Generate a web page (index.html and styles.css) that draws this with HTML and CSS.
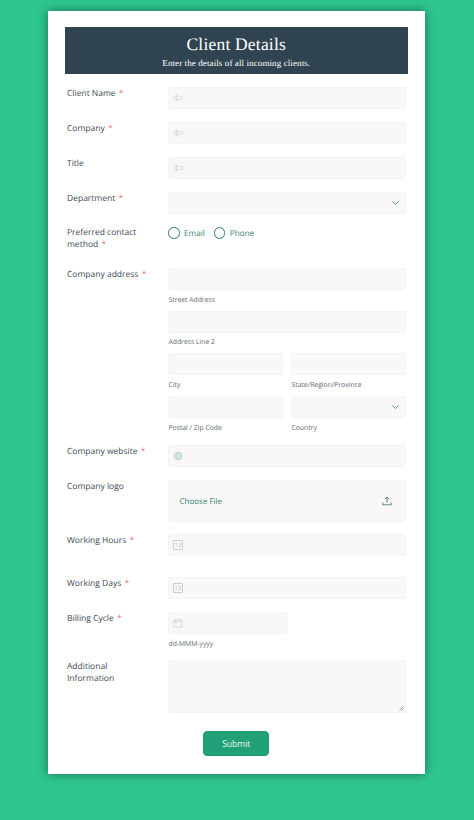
FILE: index.html
```html
<!DOCTYPE html>
<html lang="en">
<head>
<meta charset="utf-8">
<title>Client Details</title>
<link rel="stylesheet" href="styles.css">
</head>
<body>
<main class="card">
  <header class="banner">
    <h1>Client Details</h1>
    <p>Enter the details of all incoming clients.</p>
  </header>
  <form class="form">
    <div class="row h35"><div class="label">Client Name <span class="req">*</span></div>
      <div class="box"><svg class="ico" viewBox="0 0 12 8"><path d="M1 2.500h9.500v3H1zM4 1v6M2.500 1h3M2.500 7h3"/></svg></div></div>
    <div class="row h35"><div class="label">Company <span class="req">*</span></div>
      <div class="box"><svg class="ico" viewBox="0 0 12 8"><path d="M1 2.500h9.500v3H1zM4 1v6M2.500 1h3M2.500 7h3"/></svg></div></div>
    <div class="row h35"><div class="label">Title</div>
      <div class="box"><svg class="ico" viewBox="0 0 12 8"><path d="M1 2.500h9.500v3H1zM4 1v6M2.500 1h3M2.500 7h3"/></svg></div></div>
    <div class="row h34"><div class="label">Department <span class="req">*</span></div>
      <div class="box select"><svg class="chev" viewBox="0 0 10 6"><path d="M1.500 1.200 5 4.700l3.500-3.500"/></svg></div></div>
    <div class="row h42"><div class="label">Preferred contact<br>method <span class="req">*</span></div>
      <div class="radios">
        <span class="radio"><i class="dot"></i>Email</span>
        <span class="radio"><i class="dot"></i>Phone</span>
      </div></div>
    <div class="row h177"><div class="label">Company address <span class="req">*</span></div>
      <div class="addr">
        <div class="wide"><div class="box"></div><small>Street Address</small></div>
        <div class="wide"><div class="box"></div><small>Address Line 2</small></div>
        <div><div class="box"></div><small>City</small></div>
        <div><div class="box"></div><small>State/Region/Province</small></div>
        <div><div class="box"></div><small>Postal / Zip Code</small></div>
        <div><div class="box select"><svg class="chev" viewBox="0 0 10 6"><path d="M1.500 1.200 5 4.700l3.500-3.500"/></svg></div><small>Country</small></div>
      </div></div>
    <div class="row h35"><div class="label">Company website <span class="req">*</span></div>
      <div class="box"><svg class="ico globe" viewBox="0 0 10 10"><circle cx="5" cy="5" r="4"/><ellipse cx="5" cy="5" rx="1.800" ry="4"/><path d="M1 5h8M1.600 3h6.800M1.600 7h6.800"/></svg></div></div>
    <div class="row h54"><div class="label">Company logo</div>
      <div class="box file"><span>Choose File</span><svg class="upload" viewBox="0 0 10 10"><path d="M5 6.500V1M3 3l2-2 2 2M.8 6.500v2.300h8.400V6.500"/></svg></div></div>
    <div class="row h43"><div class="label">Working Hours <span class="req">*</span></div>
      <div class="box"><span class="num">12</span></div></div>
    <div class="row h35"><div class="label">Working Days <span class="req">*</span></div>
      <div class="box"><span class="num">12</span></div></div>
    <div class="row h48"><div class="label">Billing Cycle <span class="req">*</span></div>
      <div class="date"><div class="box"><svg class="ico cal" viewBox="0 0 10 10"><path d="M1 2h8v7.200H1zM1 4h8M3 1v1.500M7 1v1.500"/></svg></div><small>dd-MMM-yyyy</small></div></div>
    <div class="row h71"><div class="label">Additional<br>Information</div>
      <div class="box area"><svg class="grip" viewBox="0 0 6 6"><path d="M.5 5.500l5-5M3 5.500l2.500-2.500"/></svg></div></div>
    <div class="actions"><button type="button" class="submit">Submit</button></div>
  </form>
</main>
</body>
</html>
```
FILE: styles.css
```css
* { box-sizing: border-box; }
html, body { margin: 0; height: 820px; overflow: hidden; }
body {
  background: #2ec78f;
  font-family: "Open Sans", "Liberation Sans", sans-serif;
  padding: 11px 49px 0 48px;
  text-rendering: geometricPrecision;
}
.card {
  height: 763px;
  background: #fff;
  box-shadow: 0 0 10px rgba(20, 70, 55, .7);
  padding: 16px 17px 0 16.500px;
}
.banner {
  height: 47px;
  background: #2f4351;
  color: #fff;
  text-align: center;
  font-family: "Liberation Serif", serif;
  padding-top: 6px;
}
.banner h1 { margin: 0; font-size: 17.500px; line-height: 22px; font-weight: 400; letter-spacing: .2px; }
.banner p { margin: 2px 0 0; font-size: 9px; line-height: 12px; letter-spacing: .1px; }
.form { display: flex; flex-direction: column; padding-top: 13px; }
.row { display: grid; grid-template-columns: 103.500px 238px; }
.h35 { height: 35px; }
.h34 { height: 34px; }
.h42 { height: 42px; }
.h177 { height: 177px; }
.h54 { height: 54px; }
.h43 { height: 43px; }
.h48 { height: 48px; }
.h71 { height: 71px; }
.label {
  padding-left: 2.500px;
  font-size: 8.500px;
  line-height: 11.500px;
  color: #3d4a56;
  margin-top: 1px;
  white-space: nowrap;
}
.req { color: #e57373; margin-left: 1px; }
.box {
  position: relative;
  display: flex;
  align-items: center;
  height: 22px;
  background: #f9f7f7;
  border: 1px solid #f5f3f3;
  border-radius: 2px;
}
.ico { width: 11px; height: 8px; margin-left: 4px; fill: none; stroke: #c9cdcb; stroke-width: .6; }
.globe { width: 10px; height: 10px; stroke: #a5ccbd; }
.cal { width: 10px; height: 10px; stroke: #c4c8c6; }
.select { justify-content: flex-end; padding-right: 5px; }
.chev { width: 9px; height: 6px; fill: none; stroke: #2f7f66; stroke-width: .9; }
.radios { display: flex; gap: 9px; }
.radio { display: flex; align-items: flex-start; gap: 4.500px; font-size: 8.200px; line-height: 16px; color: #2f8467; }
.dot { width: 11.500px; height: 11.500px; margin-top: 1px; border: 1px solid #2f7f66; border-radius: 50%; background: #fff; }
.addr { display: grid; grid-template-columns: 115px 115px; column-gap: 8px; grid-auto-rows: 42.700px; }
.wide { grid-column: span 2; }
small { display: block; margin-top: 4.500px; padding-left: .5px; font-size: 6.800px; line-height: 10px; color: #5f6973; }
.file { height: 42px; justify-content: space-between; padding: 0 13px 0 10.500px; font-size: 8px; color: #2f8467; }
.upload { width: 10px; height: 10px; fill: none; stroke: #3d6f60; stroke-width: .8; }
.num {
  width: 10px; height: 10px; margin-left: 4px;
  border: 1px solid #c9cdcb; border-radius: 1px;
  font-size: 6px; line-height: 8px; text-align: center; color: #bcc0be;
}
.date { width: 120px; }
.area { height: 53px; }
.grip { position: absolute; right: 1px; bottom: 1px; width: 5px; height: 5px; fill: none; stroke: #666; stroke-width: .7; }
.actions { display: flex; justify-content: center; }
.submit {
  width: 66px; height: 24.500px; padding: 0;
  background: #21a077;
  border: 1px solid #1f9a72;
  border-radius: 4px;
  color: #eafaf4;
  font: 8.500px "Open Sans", sans-serif;
}
```
